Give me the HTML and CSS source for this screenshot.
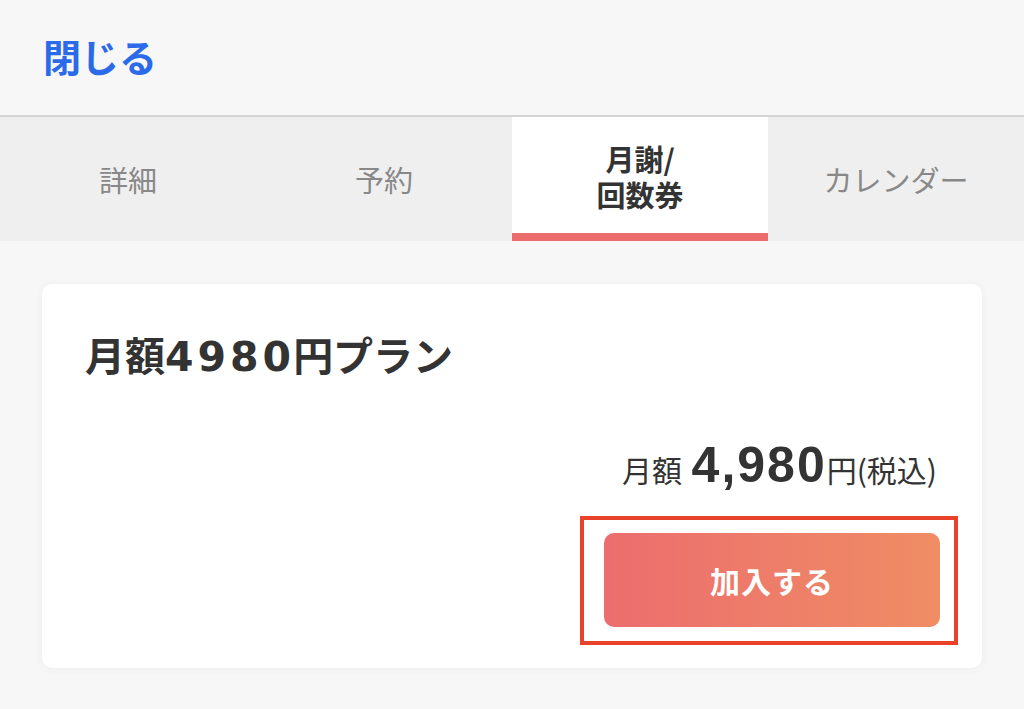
FILE: index.html
```html
<!DOCTYPE html>
<html lang="ja">
<head>
  <meta charset="UTF-8" />
  <title>月謝/回数券</title>
  <link rel="stylesheet" href="styles.css">
</head>
<body>
  <!-- Header with close link -->
  <div class="header">
    <a class="close-link" href="#">閉じる</a>
  </div>

  <!-- Tab bar -->
  <div class="tabs">
    <div class="tab">詳細</div>
    <div class="tab">予約</div>
    <div class="tab active">
      <span class="tab-line">月謝/</span>
      <span class="tab-line">回数券</span>
    </div>
    <div class="tab">カレンダー</div>
  </div>

  <!-- Plan card -->
  <div class="content">
    <div class="card">
      <div class="plan-title">月額<span class="title-num">4980</span>円プラン</div>
      <div class="price">
        <span class="price-label">月額</span>
        <span class="price-amount">4,980</span><span class="price-unit">円(税込)</span>
      </div>
      <div class="join-row">
        <div class="highlight">
          <button class="join-button">加入する</button>
        </div>
      </div>
    </div>
  </div>
</body>
</html>
```

FILE: styles.css
```css
/* Reset */
html, body {
  margin: 0;
  padding: 0;
}

body {
  font-family: "Noto Sans CJK JP", "Noto Sans", sans-serif;
  background-color: #f7f7f7;
  color: #333;
  height: 709px;
  overflow: hidden;
}

/* Header */
.header {
  height: 117px;
  padding-left: 43px;
  display: flex;
  align-items: center;
  border-bottom: 2px solid #d4d4d4;
  box-sizing: border-box;
}

.close-link {
  color: #2b6ae8;
  font-size: 38px;
  font-weight: bold;
  text-decoration: none;
  margin-top: -5px;
}

/* Tabs */
.tabs {
  display: flex;
  height: 124px;
  background-color: #efefef;
}

.tab {
  flex: 1;
  display: flex;
  flex-direction: column;
  align-items: center;
  justify-content: center;
  text-align: center;
  font-size: 29px;
  color: #888;
  box-sizing: border-box;
}

.tab-line {
  display: block;
  height: 36px;
  line-height: 36px;
}

.tab.active {
  background-color: #fff;
  color: #333;
  font-weight: bold;
  border-bottom: 8px solid #ec6d6d;
  padding-top: 2px;
}

/* Content */
.content {
  padding: 43px 42px;
}

.card {
  background-color: #fff;
  border-radius: 10px;
  box-shadow: 0 1px 8px rgba(0, 0, 0, 0.05);
  padding: 42px 45px 23px 43px;
}

.plan-title {
  font-size: 40px;
  font-weight: bold;
  height: 56px;
  line-height: 56px;
}

.title-num {
  font-family: "DejaVu Sans", sans-serif;
  font-size: 41px;
  line-height: 1;
  letter-spacing: 4px;
  margin-right: -2px;
}

.price {
  text-align: right;
  margin-top: 53px;
  height: 60px;
  line-height: 60px;
}

.price-label {
  font-size: 30px;
  margin-right: 6px;
}

.price-amount {
  font-size: 50px;
  font-weight: bold;
  letter-spacing: 2px;
  font-family: "Liberation Sans", "Noto Sans", sans-serif;
}

.price-unit {
  font-size: 30px;
}

.join-row {
  display: flex;
  justify-content: flex-end;
  margin-top: 21px;
  margin-right: -21px;
}

/* Red annotation box around the button */
.highlight {
  border: 4px solid #e8432a;
  padding: 13px 14px 14px 20px;
}

.join-button {
  display: block;
  width: 336px;
  height: 94px;
  border: none;
  border-radius: 10px;
  background: linear-gradient(to right, #ec6d6e, #ef8d64);
  color: #fff;
  font-family: "Noto Sans CJK JP", sans-serif;
  font-size: 30px;
  font-weight: bold;
  letter-spacing: 1px;
  cursor: pointer;
}
```
